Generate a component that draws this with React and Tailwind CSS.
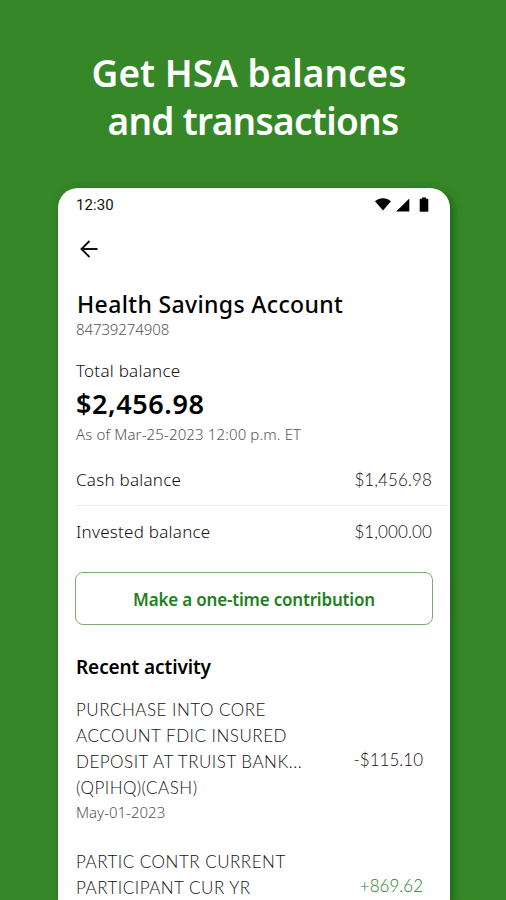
import React from "react";

const transactions = [
  {
    lines: [
      "PURCHASE INTO CORE",
      "ACCOUNT FDIC INSURED",
      "DEPOSIT AT TRUIST BANK...",
      "(QPIHQ)(CASH)",
    ],
    date: "May-01-2023",
    amount: "-$115.10",
    credit: false,
  },
  {
    lines: ["PARTIC CONTR CURRENT", "PARTICIPANT CUR YR"],
    amount: "+869.62",
    credit: true,
  },
];

const StatusBar = () => (
  <div className="flex h-[34px] items-center justify-between pl-[18px] pr-[19px]">
    <span className="pt-px font-[Roboto,sans-serif] text-[15px] tracking-[0.1px] text-[#111]">
      12:30
    </span>
    <svg width="56" height="16" viewBox="0 0 56 16" fill="#000">
      <path d="M0 4.2C4.5 0.2 11.5 0.2 16 4.2L8 13.4Z" />
      <path d="M21.2 14.4L34.3 1.4V14.4Z" />
      <path d="M47 0.4h4v1.3h1.6q.7 0 .7.7v11.6q0 .8-.8.8h-7q-.8 0-.8-.8V2.4q0-.7.7-.7h1.6z" />
    </svg>
  </div>
);

const BalanceRow = ({ label, amount }) => (
  <div className="flex items-center justify-between pr-[18px] text-[17px] font-light text-[#111]">
    <span className="tracking-[0.25px]">{label}</span>
    <span className="font-[Lato,sans-serif] tracking-[0.1px]">{amount}</span>
  </div>
);

const Transaction = ({ lines, date, amount, credit }) => (
  <li className="flex min-h-[74px] items-center justify-between pr-[27px]">
    <div className="self-start">
      {lines.map((line) => (
        <p
          key={line}
          className="whitespace-nowrap font-[Lato,sans-serif] text-[17px] font-light leading-[26px] tracking-[0.5px] text-[#111]"
        >
          {line}
        </p>
      ))}
      {date && (
        <p className="text-[15px] font-light leading-[22px] text-[#555]">
          {date}
        </p>
      )}
    </div>
    <span
      className={`font-[Lato,sans-serif] text-[17px] font-light ${
        credit ? "text-[#248018]" : "text-[#111]"
      }`}
    >
      {amount}
    </span>
  </li>
);

const App = () => {
  return (
    <div className="h-screen overflow-hidden bg-[#368727] font-['Noto_Sans',sans-serif]">
      <h1 className="flex h-[188px] flex-col items-center pt-[49px] text-[37px] font-semibold leading-[48px] text-white">
        <span className="-ml-[8px]">Get HSA balances</span>
        <span className="tracking-[-0.7px]">and transactions</span>
      </h1>

      <main className="ml-[58px] h-[712px] w-[392px] rounded-t-[20px] bg-white shadow-[3px_3px_8px_rgba(0,60,0,0.5)]">
        <StatusBar />

        <div className="flex h-[54px] items-center pl-[22px]">
          <svg
            width="18"
            height="18"
            viewBox="0 0 18 18"
            fill="none"
            stroke="#111"
            strokeWidth="1.9"
          >
            <path d="M17.5 9H1.8M9.5 1L1.5 9L9.5 17" />
          </svg>
        </div>

        <div className="pl-[18px]">
          <h2 className="pl-px pt-[11px] text-[23px] font-medium leading-[34px] tracking-[0.36px] text-black">
            Health Savings Account
          </h2>
          <p className="text-[15px] font-light leading-4 tracking-[-0.1px] text-[#555]">
            84739274908
          </p>

          <p className="mt-6 text-[17px] font-light leading-5 tracking-[0.25px] text-[#111]">
            Total balance
          </p>
          <p className="text-[27px] font-semibold leading-[46px] tracking-[0.6px] text-black">
            $2,456.98
          </p>
          <p className="text-[15px] font-light leading-[14px] tracking-[0.13px] text-[#555]">
            As of Mar-25-2023 12:00 p.m. ET
          </p>

          <div className="mr-[3px] mt-[14px] h-[51px] border-b border-[#ececec] pt-3">
            <div className="-mr-[3px]">
              <BalanceRow label="Cash balance" amount="$1,456.98" />
            </div>
          </div>
          <div className="h-[52px] pt-[13px]">
            <BalanceRow label="Invested balance" amount="$1,000.00" />
          </div>

          <button className="-ml-px mt-[14px] flex h-[53px] w-[358px] items-center justify-center rounded-lg border border-[#79ad70] pt-[2px] text-[17px] font-semibold tracking-[-0.19px] text-[#1d801d]">
            Make a one-time contribution
          </button>

          <h3 className="mt-7 text-[19px] font-semibold leading-7 tracking-[-0.1px] text-black">
            Recent activity
          </h3>
          <ul className="mt-4 flex flex-col gap-[26px]">
            {transactions.map((transaction) => (
              <Transaction key={transaction.amount} {...transaction} />
            ))}
          </ul>
        </div>
      </main>
    </div>
  );
};

export default App;
